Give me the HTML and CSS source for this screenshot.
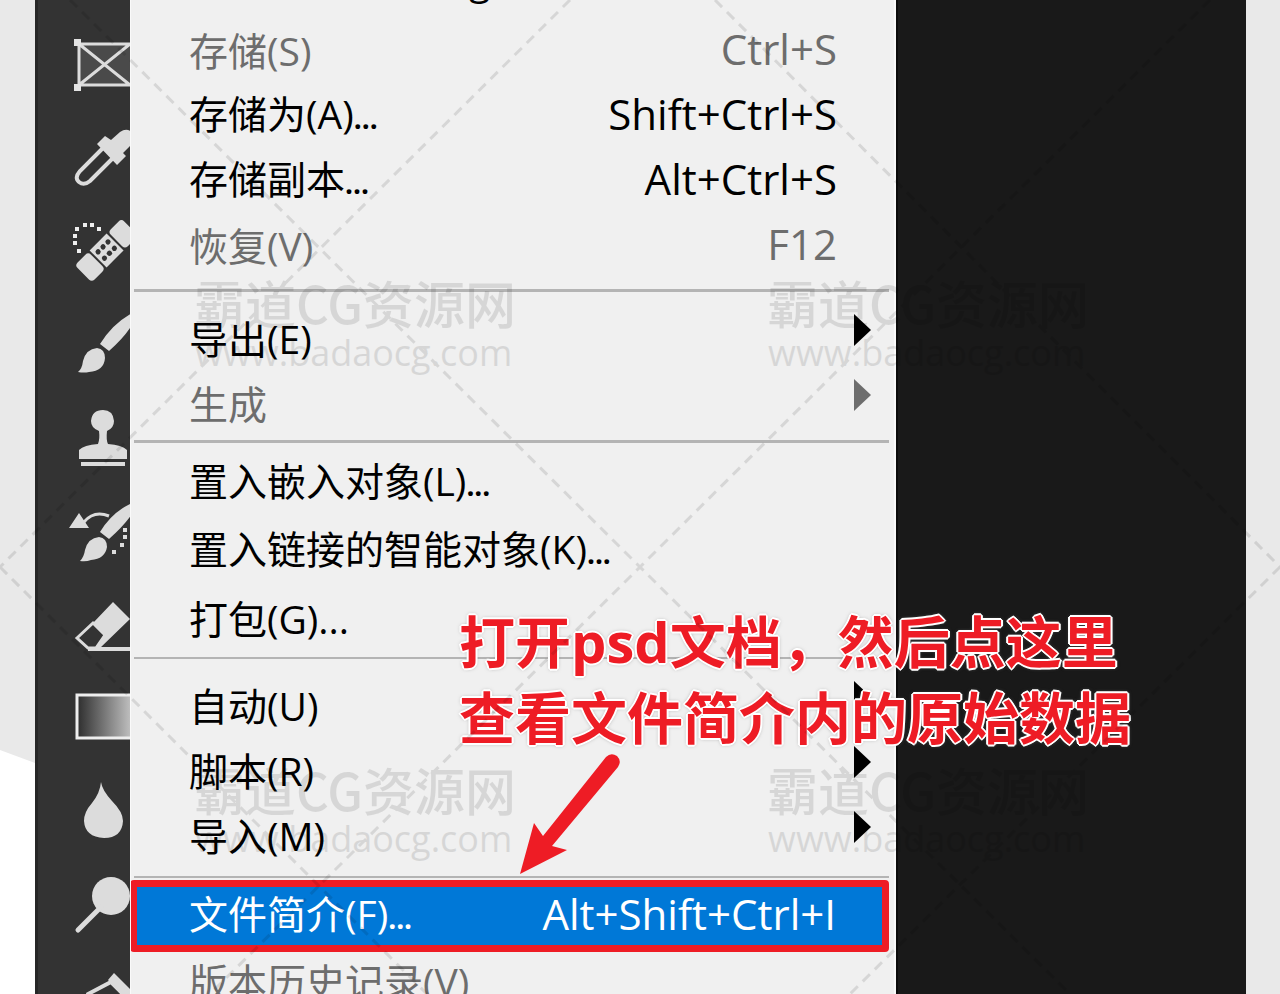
FILE: index.html
```html
<!DOCTYPE html>
<html lang="zh-CN">
<head>
  <meta charset="UTF-8" />
  <meta name="viewport" content="width=device-width, initial-scale=1.0"/>
  <title>文件简介</title>
  <link rel="stylesheet" href="styles.css">
</head>
<body>
  <main class="page">
    <div class="gutter"></div>

    <nav class="tools" aria-label="工具">
      <button class="tool" aria-label="图框">
        <svg viewBox="0 2 64 64">
          <path d="M14 14H70V56H14z" fill="#4a4a4a"/>
          <path d="M13 14H70M13 55H70M13 14V55M13 14L64 55M13 55L64 14" fill="none" stroke="#dcdcdc" stroke-width="3"/>
          <path d="M8 9h7v7H8zM8 54h7v7H8z" fill="#e4e4e4"/>
        </svg>
      </button>
      <button class="tool" aria-label="吸管">
        <svg viewBox="0 -2 64 64">
          <path d="M37 21L14 44Q8 51 13 55Q18 59 24 54L47 31" fill="none" stroke="#dcdcdc" stroke-width="4"/>
          <path d="M31 17L39 9L45 13L54 5Q61 0 67 6Q71 12 66 17L57 26L60 29L51 38z" fill="#dcdcdc"/>
        </svg>
      </button>
      <button class="tool" aria-label="修复画笔">
        <svg viewBox="0 0 64 64">
          <g transform="translate(42 31) rotate(-45)" fill="#dcdcdc">
            <rect x="-35" y="-12" width="19" height="24" rx="4"/>
            <rect x="-14" y="-12" width="24" height="24"/>
            <rect x="12" y="-12" width="19" height="24" rx="4"/>
            <g fill="#333">
              <circle cx="-9" cy="-5" r="2.6"/><circle cx="-2" cy="-5" r="2.6"/><circle cx="5" cy="-5" r="2.6"/>
              <circle cx="-9" cy="4" r="2.6"/><circle cx="-2" cy="4" r="2.6"/><circle cx="5" cy="4" r="2.6"/>
            </g>
          </g>
          <path d="M11 31h4v4h-4zM7 23h4v4H7zM7 16h4v4H7zM9 9h4v4H9zM17 5h4v4h-4zM24 5h4v4h-4zM31 9h4v4h-4z" fill="#eee"/>
        </svg>
      </button>
      <button class="tool" aria-label="画笔">
        <svg viewBox="0 0 64 64">
          <path d="M34 33Q46 13 66 2V14Q58 27 43 40zM12 61Q16 58 17 50Q20 38 31 37Q39 38 39 47Q38 60 23 61Q18 62 12 61z" fill="#dcdcdc"/>
        </svg>
      </button>
      <button class="tool" aria-label="仿制图章">
        <svg viewBox="0 2 64 64">
          <path d="M33 29Q25 26 25 19Q26 8 37 8Q47 8 48 19Q48 26 41 29Q40 38 42 42Q56 43 61 48V57H13V48Q18 43 32 42Q34 37 33 29zM15 60H59V64H15z" fill="#dcdcdc"/>
        </svg>
      </button>
      <button class="tool" aria-label="历史记录画笔">
        <svg viewBox="0 0 64 64">
          <path d="M34 35Q46 15 66 6V17Q58 29 43 42zM14 64Q18 60 19 53Q22 41 33 40Q41 41 41 50Q39 62 25 63Q20 65 14 64z" fill="#dcdcdc"/>
          <path d="M3 31L13 16L23 31zM57 31h4v4h-4zM57 38h4v4h-4zM54 46h4v4h-4zM46 53h4v4h-4z" fill="#dcdcdc"/>
          <path d="M18 25Q28 13 43 19" fill="none" stroke="#dcdcdc" stroke-width="3"/>
        </svg>
      </button>
      <button class="tool" aria-label="橡皮擦">
        <svg viewBox="0 -4 64 64">
          <path d="M11 44L27 29L39 41L30 54H22z" fill="none" stroke="#dcdcdc" stroke-width="3"/>
          <path d="M27 29L47 8L64 25L34 54H30L39 41zM22 53H70V57H22z" fill="#dcdcdc"/>
        </svg>
      </button>
      <button class="tool" aria-label="渐变">
        <svg viewBox="0 -2 64 64">
          <defs><linearGradient id="grad"><stop offset="0" stop-color="#2d2d2d"/><stop offset="1" stop-color="#d0d0d0"/></linearGradient></defs>
          <rect x="11" y="10" width="60" height="43" fill="url(#grad)" stroke="#eee" stroke-width="3"/>
        </svg>
      </button>
      <button class="tool" aria-label="模糊">
        <svg viewBox="0 -2 64 64">
          <path d="M35 4Q36 12 46 23Q57 34 57 43Q56 60 38 60Q19 59 18 43Q18 34 26 25Q34 15 35 4z" fill="#dcdcdc"/>
        </svg>
      </button>
      <button class="tool" aria-label="减淡">
        <svg viewBox="0 -2 64 64">
          <circle cx="45" cy="25" r="19" fill="#dcdcdc"/>
          <path d="M35 36L12 59" stroke="#dcdcdc" stroke-width="5" stroke-linecap="round"/>
        </svg>
      </button>
      <button class="tool" aria-label="钢笔">
        <svg viewBox="0 5 64 64">
          <path d="M16 60L22 37L45 25L58 38L44 58z" fill="none" stroke="#dcdcdc" stroke-width="4"/>
          <path d="M42 23L48 16L68 36L60 43z" fill="#dcdcdc"/>
        </svg>
      </button>
    </nav>

    <div class="menu">
      <div class="group">
        <button class="item"><span>关闭并转到 Bridge<i>...</i></span></button>
        <button class="item" disabled><span>存储(S)</span><kbd>Ctrl+S</kbd></button>
        <button class="item"><span>存储为(A)<i>...</i></span><kbd>Shift+Ctrl+S</kbd></button>
        <button class="item"><span>存储副本<i>...</i></span><kbd>Alt+Ctrl+S</kbd></button>
        <button class="item" disabled><span>恢复(V)</span><kbd>F12</kbd></button>
      </div>
      <div class="group spaced">
        <button class="item sub"><span>导出(E)</span><svg class="arrow" viewBox="0 0 17 32"><path d="M0 0L17 16L0 32z"/></svg></button>
        <button class="item sub" disabled><span>生成</span><svg class="arrow" viewBox="0 0 17 32"><path d="M0 0L17 16L0 32z"/></svg></button>
      </div>
      <div class="group tall">
        <button class="item"><span>置入嵌入对象(L)<i>...</i></span></button>
        <button class="item"><span>置入链接的智能对象(K)<i>...</i></span></button>
        <button class="item"><span>打包(G)...</span></button>
      </div>
      <div class="group thin spaced">
        <button class="item sub"><span>自动(U)</span><svg class="arrow" viewBox="0 0 17 32"><path d="M0 0L17 16L0 32z"/></svg></button>
        <button class="item sub"><span>脚本(R)</span><svg class="arrow" viewBox="0 0 17 32"><path d="M0 0L17 16L0 32z"/></svg></button>
        <button class="item sub"><span>导入(M)</span><svg class="arrow" viewBox="0 0 17 32"><path d="M0 0L17 16L0 32z"/></svg></button>
      </div>
      <div class="group thin">
        <button class="item active"><span>文件简介(F)<i>...</i></span><kbd>Alt+Shift+Ctrl+I</kbd></button>
        <button class="item" disabled><span>版本历史记录(V)</span></button>
      </div>
    </div>

    <div class="canvas"></div>
    <div class="gutter-right"></div>

    <p class="note">打开psd文档，然后点这里<br>查看文件简介内的原始数据</p>
    <svg class="pointer" viewBox="0 0 100 122">
      <path d="M1 121L15 70L24 83L87 4Q92 -1 98 3Q103 8 99 14L33 93L48 97z" fill="#ee1c25"/>
    </svg>

    <svg class="watermark" viewBox="0 0 1280 994">
      <path class="dashes" d="M70 0L640 567L1070 994M715 0L1280 567M0 567L427 994M570 0L0 567M1210 0L640 567L210 994M1280 567L850 994"/>
      <text class="brand" x="194" y="324">霸道CG资源网</text>
      <text class="url" x="195" y="366">www.badaocg.com</text>
      <text class="brand" x="767" y="324">霸道CG资源网</text>
      <text class="url" x="768" y="366">www.badaocg.com</text>
      <text class="brand" x="194" y="811">霸道CG资源网</text>
      <text class="url" x="195" y="852">www.badaocg.com</text>
      <text class="brand" x="767" y="811">霸道CG资源网</text>
      <text class="url" x="768" y="852">www.badaocg.com</text>
    </svg>
  </main>
</body>
</html>
```
FILE: styles.css
```css
* {
  box-sizing: border-box;
}

body {
  margin: 0;
  background: #e9e9e9;
  font-family: "Open Sans", "Noto Sans CJK SC", sans-serif;
}

button {
  border: none;
  padding: 0;
  background: none;
  font: inherit;
  color: inherit;
}

.page {
  position: relative;
  display: grid;
  grid-template-columns: 35px 95px 766px 1fr 34px;
  height: 100vh;
  overflow: hidden;
}

/* white wedge at the bottom of the left margin */
.gutter {
  display: flex;
  align-items: flex-end;
}

.gutter::after {
  content: "";
  width: 100%;
  height: 244px;
  background: #fff;
  clip-path: polygon(0 0, 100% 13px, 100% 100%, 0 100%);
}

.tools {
  display: flex;
  flex-direction: column;
  gap: 29px;
  padding: 32px 0 0 28px;
  background: #333;
  border-left: 3px solid #272727;
  overflow: hidden;
}

.tool {
  flex: none;
  width: 64px;
  height: 64px;
}

.tool svg {
  display: block;
  width: 64px;
  height: 64px;
  overflow: visible;
}

.menu {
  min-width: 0;
  overflow: hidden;
  background: #f0f0f0;
  border-left: 1px solid #fafafa;
  border-right: 2px solid #fafafa;
}

.group {
  margin-right: 5px;
}

.group:first-child {
  margin-top: -51px;
  padding-bottom: 11px;
}

.group:first-child .item:first-child {
  margin-bottom: 4px;
}

.group + .group::before {
  content: "";
  display: block;
  height: 3px;
  margin-left: 3px;
  background: #b4b4b4;
}

.group.thin::before {
  height: 2px;
}

.spaced {
  padding-bottom: 4px;
}

.spaced .item:first-of-type {
  margin-top: 14px;
}

.item {
  display: flex;
  align-items: center;
  justify-content: space-between;
  width: 100%;
  height: 65px;
  padding: 0 52px 0 58px;
  font-size: 39px;
  line-height: 48px;
  color: #000;
  text-align: left;
  white-space: nowrap;
}

.item i {
  font-size: 28px;
  font-style: normal;
  font-weight: 700;
}

.item kbd {
  margin-bottom: 4px;
  font-family: "Open Sans", sans-serif;
  font-size: 42px;
}

.item:disabled {
  color: #6d6d6d;
}

.sub {
  padding-right: 18px;
}

.arrow {
  width: 17px;
  height: 32px;
  margin-bottom: 18px;
  fill: currentColor;
}

.tall {
  padding-bottom: 4px;
}

.tall .item {
  height: 68px;
}

.tall .item:first-child {
  margin-top: 6px;
}

.thin.spaced {
  padding-bottom: 8px;
}

.active {
  width: calc(100% + 1px);
  height: 72px;
  margin: 2px 0 -3px -1px;
  padding: 0 46px 0 52px;
  border: 7px solid #ee1c25;
  border-radius: 4px;
  background: #0078d7;
  color: #fff;
}

.canvas {
  background: #191919;
  border-left: 2px solid #0c0c0c;
}

/* instruction written over the menu and the canvas */
.note {
  position: absolute;
  left: 459px;
  top: 603px;
  margin: 0;
  color: #ee1c25;
  font-size: 56px;
  font-weight: 700;
  line-height: 76px;
  white-space: nowrap;
  text-shadow: 2px 0 #fff, -2px 0 #fff, 0 2px #fff, 0 -2px #fff,
    1px 1px #fff, -1px 1px #fff, 1px -1px #fff, -1px -1px #fff,
    0 0 4px #777;
}

.pointer {
  position: absolute;
  left: 519px;
  top: 753px;
  width: 100px;
  height: 122px;
  overflow: visible;
}

.watermark {
  position: absolute;
  left: 0;
  top: 0;
  width: 1280px;
  height: 994px;
  opacity: 0.1;
  pointer-events: none;
}

.dashes {
  fill: none;
  stroke: #000;
  stroke-width: 3;
  stroke-dasharray: 10 7;
}

.brand {
  font-family: "Noto Sans CJK SC", sans-serif;
  font-size: 51px;
  font-weight: 500;
}

.url {
  font-family: "Open Sans", sans-serif;
  font-size: 36px;
}
```
